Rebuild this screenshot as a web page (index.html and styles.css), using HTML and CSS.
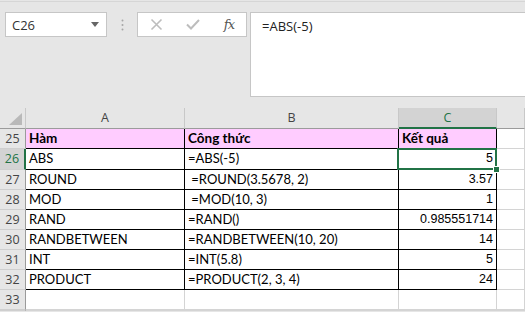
FILE: index.html
```html
<!DOCTYPE html>
<html lang="vi">
<head>
    <meta charset="UTF-8">
    <title>Hàm toán học</title>
    <link rel="stylesheet" href="styles.css">
</head>
<body>
    <div class="toolbar">
        <div class="namebox">
            <span>C26</span>
            <svg class="caret" width="8" height="5" viewBox="0 0 8 5"><path d="M0 0h8L4 5z" fill="#666"/></svg>
        </div>
        <div class="dots">
            <svg width="3" height="12" viewBox="0 0 3 12"><circle cx="1.5" cy="1.5" r="1" fill="#a6a6a6"/><circle cx="1.5" cy="6" r="1" fill="#a6a6a6"/><circle cx="1.5" cy="10.5" r="1" fill="#a6a6a6"/></svg>
        </div>
        <div class="fxbox">
            <svg width="13" height="13" viewBox="0 0 13 13"><path d="M1.5 1.5l10 10M11.5 1.5l-10 10" stroke="#bdbdbd" stroke-width="1.6"/></svg>
            <svg width="14" height="11" viewBox="0 0 14 11"><path d="M1 5.5l4 4L13 1" stroke="#bdbdbd" stroke-width="2" fill="none"/></svg>
            <span class="fx">fx</span>
        </div>
        <div class="formula">=ABS(-5)</div>
    </div>

    <div class="sheet">
        <div class="corner"><svg width="13" height="12" viewBox="0 0 13 12"><path d="M13 0v12H0z" fill="#b9b9b9"/></svg></div>
        <div class="colhead">A</div>
        <div class="colhead">B</div>
        <div class="colhead active">C</div>
        <div class="colhead last">D</div>

        <div class="rowhead">25</div>
        <div class="cell th">Hàm</div>
        <div class="cell th">Công thức</div>
        <div class="cell th">Kết quả</div>
        <div class="cell empty"></div>

        <div class="rowhead active">26</div>
        <div class="cell">ABS</div>
        <div class="cell">=ABS(-5)</div>
        <div class="cell num">5</div>
        <div class="cell empty"></div>

        <div class="rowhead">27</div>
        <div class="cell">ROUND</div>
        <div class="cell">&nbsp;=ROUND(3.5678, 2)</div>
        <div class="cell num">3.57</div>
        <div class="cell empty"></div>

        <div class="rowhead">28</div>
        <div class="cell">MOD</div>
        <div class="cell">&nbsp;=MOD(10, 3)</div>
        <div class="cell num">1</div>
        <div class="cell empty"></div>

        <div class="rowhead">29</div>
        <div class="cell">RAND</div>
        <div class="cell">=RAND()</div>
        <div class="cell num">0.985551714</div>
        <div class="cell empty"></div>

        <div class="rowhead">30</div>
        <div class="cell">RANDBETWEEN</div>
        <div class="cell">=RANDBETWEEN(10, 20)</div>
        <div class="cell num">14</div>
        <div class="cell empty"></div>

        <div class="rowhead">31</div>
        <div class="cell">INT</div>
        <div class="cell">=INT(5.8)</div>
        <div class="cell num">5</div>
        <div class="cell empty"></div>

        <div class="rowhead">32</div>
        <div class="cell">PRODUCT</div>
        <div class="cell">=PRODUCT(2, 3, 4)</div>
        <div class="cell num">24</div>
        <div class="cell empty"></div>

        <div class="rowhead">33</div>
        <div class="cell empty"></div>
        <div class="cell empty"></div>
        <div class="cell empty"></div>
        <div class="cell empty"></div>

        <div class="rowhead"></div>
        <div class="cell empty"></div>
        <div class="cell empty"></div>
        <div class="cell empty"></div>
        <div class="cell empty"></div>

        <div class="selection"><span class="handle"></span></div>
    </div>
</body>
</html>
```

FILE: styles.css
```css
* {
    margin: 0;
    padding: 0;
    box-sizing: border-box;
}

body {
    width: 525px;
    height: 312px;
    overflow: hidden;
    background-color: #e6e6e6;
    font-family: 'Open Sans', 'Noto Sans', sans-serif;
}

.toolbar {
    height: 107px;
    margin-top: 1px;
    border-top: 1px solid #d6d6d6;
    padding: 10px 0 0 5px;
    display: flex;
    align-items: flex-start;
}

.namebox {
    width: 102px;
    height: 25px;
    background-color: white;
    border: 1px solid #c6c6c6;
    display: flex;
    align-items: center;
    justify-content: space-between;
    padding: 0 7px 0 6px;
    font-size: 13px;
    color: #333;
}

.dots {
    width: 30px;
    height: 25px;
    display: flex;
    align-items: center;
    justify-content: center;
}

.fxbox {
    width: 110px;
    height: 25px;
    background-color: white;
    border: 1px solid #c6c6c6;
    display: flex;
    align-items: center;
    justify-content: space-between;
    padding: 0 12px 0 12px;
}

.fx {
    font-family: 'DejaVu Serif', serif;
    font-style: italic;
    font-size: 13px;
    color: #555;
    letter-spacing: -1px;
}

.formula {
    flex: 1;
    height: 85px;
    margin-left: 3px;
    background-color: white;
    border: 1px solid #c6c6c6;
    border-right: none;
    padding: 4px 0 0 11px;
    font-size: 13px;
    color: #222;
}

.sheet {
    position: relative;
    display: grid;
    grid-template-columns: 26px 159px 214px 98px 1fr;
    grid-template-rows: 21px 20px 21px repeat(7, 20px);
    font-family: 'Lato', 'Liberation Sans', sans-serif;
    font-size: 13px;
}

.corner {
    border-right: 1px solid #c8c8c8;
    border-bottom: 1px solid #9b9b9b;
    display: flex;
    align-items: flex-end;
    justify-content: flex-end;
    padding: 0 3px 3px 0;
}

.colhead {
    border-right: 1px solid #c8c8c8;
    border-bottom: 1px solid #9b9b9b;
    text-align: center;
    line-height: 20px;
    font-family: 'Open Sans', sans-serif;
    font-size: 12.5px;
    color: #444;
}

.colhead.active {
    background-color: #d3d3d3;
    color: #217346;
    border-bottom: 2px solid #217346;
}

.colhead.last {
    text-align: left;
    padding-left: 27px;
    overflow: hidden;
}

.rowhead {
    border-right: 1px solid #9b9b9b;
    border-bottom: 1px solid #cfcfcf;
    text-align: center;
    line-height: 19px;
    font-family: 'Open Sans', sans-serif;
    font-size: 12.5px;
    color: #444;
}

.rowhead.active {
    background-color: #d3d3d3;
    color: #217346;
    border-right: 2px solid #217346;
}

.cell {
    background-color: white;
    border-right: 1px solid #000;
    border-bottom: 1px solid #000;
    padding: 0 3px;
    line-height: 19px;
    white-space: nowrap;
    overflow: hidden;
    color: #000;
}

.cell.th {
    background-color: #ffccff;
    font-weight: bold;
    font-size: 13.5px;
}

.cell.num {
    text-align: right;
    font-family: 'Liberation Sans', sans-serif;
    font-size: 12.5px;
}

.cell.empty {
    border-right: 1px solid #d4d4d4;
    border-bottom: 1px solid #d4d4d4;
}

.selection {
    position: absolute;
    left: 397px;
    top: 40px;
    width: 100px;
    height: 22px;
    border: 2px solid #217346;
}

.handle {
    position: absolute;
    right: -5px;
    bottom: -5px;
    width: 7px;
    height: 7px;
    background-color: #217346;
    border: 1px solid white;
}
```
